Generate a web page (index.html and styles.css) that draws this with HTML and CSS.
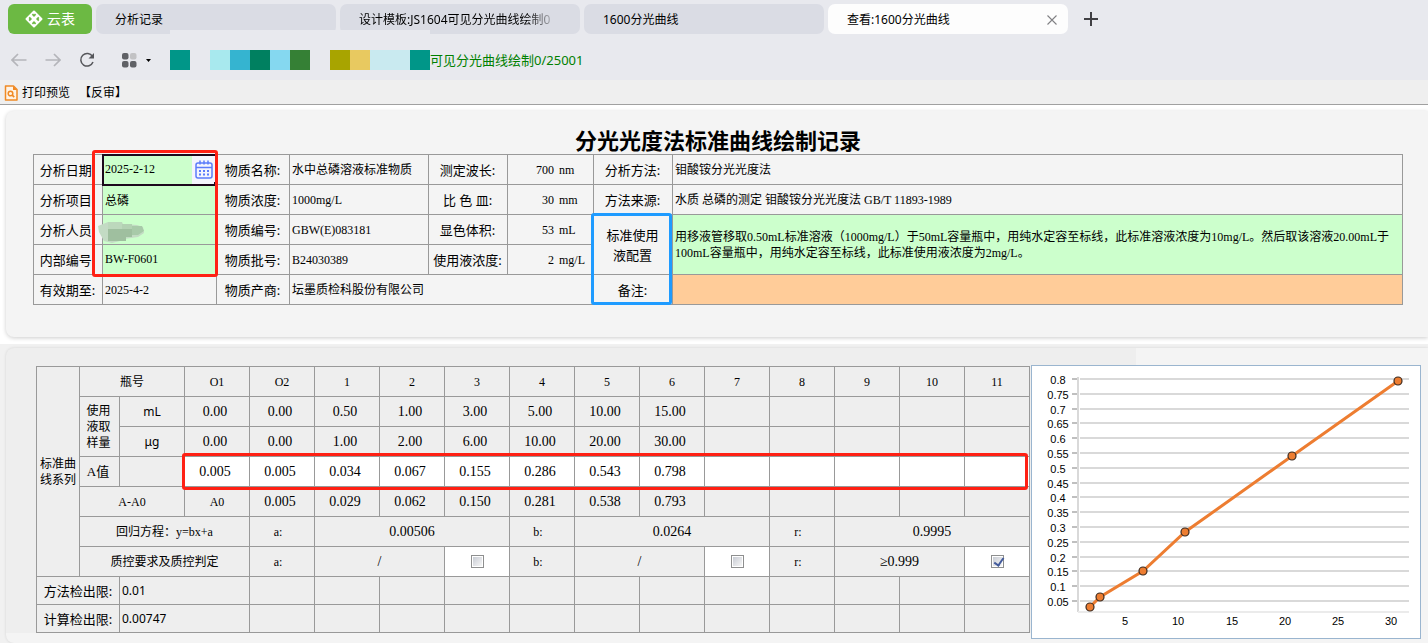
FILE: index.html
```html
<!DOCTYPE html>
<html lang="zh-CN">
<head>
    <meta charset="UTF-8">
    <meta name="viewport" content="width=device-width, initial-scale=1.0">
    <title>分光光度法标准曲线绘制记录</title>
    <link rel="stylesheet" href="styles.css">
</head>
<body>

    <header class="top">
        <nav class="tabs">
            <button class="logo" type="button">
                <svg width="18" height="18" viewBox="0 0 18 18">
                    <path d="M9 1.500L16.500 9 9 16.500 1.500 9z" fill="#fff" stroke="#fff" stroke-width="2" stroke-linejoin="round"/>
                    <path d="M9 7L6.800 4.800 8 3.600l1 .8 1-.8 1.200 1.200zM9 11l-2.200 2.200L8 14.400l1-.8 1 .8 1.200-1.200zM7 9L4.800 6.800 3.600 8l.8 1-.8 1 1.200 1.200zM11 9l2.200-2.200L14.400 8l-.8 1 .8 1-1.200 1.200z" fill="#6cb943"/>
                </svg>
                云表
            </button>
            <a class="tab" href="#">分析记录</a>
            <a class="tab" href="#"><span class="fade">设计模板:JS1604可见分光曲线绘制0</span></a>
            <a class="tab" href="#">1600分光曲线</a>
            <div class="tab active">
                <a href="#">查看:1600分光曲线</a>
                <button class="icon-btn" type="button" aria-label="关闭">
                    <svg width="10" height="10" viewBox="0 0 10 10"><path d="M.5.5l9 9M9.5.5l-9 9" stroke="#808084" stroke-width="1.1"/></svg>
                </button>
            </div>
            <button class="icon-btn add" type="button" aria-label="新建">
                <svg width="14" height="14" viewBox="0 0 14 14"><path d="M7 0v14M0 7h14" stroke="#404044" stroke-width="2"/></svg>
            </button>
            <div class="cover"></div>
        </nav>

        <div class="toolbar">
            <button class="icon-btn" type="button" aria-label="后退">
                <svg width="16" height="14" viewBox="0 0 16 14"><path d="M15.500 7H1M7 1L1 7l6 6" fill="none" stroke="#b4b5ba" stroke-width="1.700"/></svg>
            </button>
            <button class="icon-btn" type="button" aria-label="前进">
                <svg width="16" height="14" viewBox="0 0 16 14"><path d="M.5 7H15M9 1l6 6-6 6" fill="none" stroke="#b4b5ba" stroke-width="1.700"/></svg>
            </button>
            <button class="icon-btn" type="button" aria-label="刷新">
                <svg width="16" height="16" viewBox="0 0 16 16">
                    <path d="M13.500 4.500A6.300 6.300 0 1 0 14 10" fill="none" stroke="#55565a" stroke-width="1.500"/>
                    <path d="M15 1v5.500H9.500z" fill="#55565a"/>
                </svg>
            </button>
            <button class="icon-btn apps" type="button" aria-label="应用">
                <svg width="16" height="16" viewBox="0 0 16 16">
                    <rect x="1" y="1" width="6.500" height="6.500" rx="2" fill="#606166"/>
                    <rect x="9" y="1" width="6.500" height="6.500" rx="2" fill="#c2c2c4"/>
                    <rect x="1" y="9" width="6.500" height="6.500" rx="2" fill="#606166"/>
                    <rect x="9" y="9" width="6.500" height="6.500" rx="2" fill="#606166"/>
                </svg>
                <svg width="5" height="3" viewBox="0 0 5 3"><path d="M0 0h5L2.500 3z"/></svg>
            </button>
            <div class="blocks">
                <i class="teal"></i><i></i><i class="ice"></i><i class="blue"></i><i class="green"></i><i class="sky"></i><i class="leaf"></i><i></i><i class="olive"></i><i class="sand"></i><i class="pale"></i><i class="pale"></i><i class="teal"></i>
            </div>
            <span class="path">可见分光曲线绘制0/25001</span>
        </div>
    </header>

    <div class="actions">
        <button type="button">
            <svg width="14" height="16" viewBox="0 0 14 16">
                <path d="M1.500 1h8L13 4.500V15H1.500z" fill="#fff3e4" stroke="#f08a24" stroke-width="1.500" stroke-linejoin="round"/>
                <path d="M9 1v4h4z" fill="#f08a24"/>
                <circle cx="6.500" cy="8.500" r="2.300" fill="none" stroke="#f08a24" stroke-width="1.500"/>
                <path d="M8.200 10.200l2 2" stroke="#f08a24" stroke-width="1.700"/>
            </svg>
            打印预览
        </button>
        <button type="button">【反审】</button>
    </div>

    <main>
        <section class="panel">
            <h1>分光光度法标准曲线绘制记录</h1>
            <div class="sheet">
                <table class="info">
                    <colgroup>
                        <col class="w69"><col class="w114"><col class="w73"><col class="w139"><col class="w79"><col class="w86"><col class="w79"><col>
                    </colgroup>
                    <tr>
                        <th><label for="date">分析日期:</label></th>
                        <td class="edit selected">
                            <div class="date">
                                <input id="date" type="text" value="2025-2-12">
                                <button class="icon-btn" type="button" aria-label="选择日期">
                                    <svg width="18" height="19" viewBox="0 0 18 19">
                                        <rect x="1" y="3" width="16" height="15" rx="2" fill="none" stroke="#5b7cfa" stroke-width="1.500"/>
                                        <path d="M1 7.500h16M5 .5v4M9 .5v4M13 .5v4" stroke="#5b7cfa" stroke-width="1.500"/>
                                        <path d="M4 11h2m2 0h2m2 0h2M4 14.500h2m2 0h2m2 0h2" stroke="#5b7cfa" stroke-width="1.800"/>
                                    </svg>
                                </button>
                            </div>
                        </td>
                        <th>物质名称:</th><td>水中总磷溶液标准物质</td>
                        <th>测定波长:</th><td><div class="measure"><span>700</span>nm</div></td>
                        <th>分析方法:</th><td>钼酸铵分光光度法</td>
                    </tr>
                    <tr>
                        <th><label for="item">分析项目:</label></th>
                        <td class="edit"><input id="item" type="text" value="总磷"></td>
                        <th>物质浓度:</th><td>1000mg/L</td>
                        <th>比 色 皿:</th><td><div class="measure"><span>30</span>mm</div></td>
                        <th>方法来源:</th><td>水质 总磷的测定 钼酸铵分光光度法 GB/T 11893-1989</td>
                    </tr>
                    <tr>
                        <th><label for="person">分析人员:</label></th>
                        <td class="edit masked">
                            <input id="person" type="text">
                            <svg width="46" height="22" viewBox="0 0 46 22">
                                <path d="M0 5l10-4h14l1 2 14 1 6 2 1 6-6 4-14 2-4 2-8 2-8-2-5-9z" fill="#c3dbc4"/>
                                <path d="M10 1h14v7H10z" fill="#bcd8bc"/>
                                <path d="M24 3h10v5H24z" fill="#b3d1b3"/>
                                <path d="M10 8h24v8H28v4H10z" fill="#9fbf9f"/>
                                <path d="M34 5h10l2 5-6 4h-6z" fill="#a8caa9"/>
                            </svg>
                        </td>
                        <th>物质编号:</th><td>GBW(E)083181</td>
                        <th>显色体积:</th><td><div class="measure"><span>53</span>mL</div></td>
                        <th rowspan="2"><label class="two-line" for="prep">标准使用<br>液配置</label></th>
                        <td class="edit" rowspan="2"><textarea id="prep" rows="2">用移液管移取0.50mL标准溶液（1000mg/L）于50mL容量瓶中，用纯水定容至标线，此标准溶液浓度为10mg/L。然后取该溶液20.00mL于100mL容量瓶中，用纯水定容至标线，此标准使用液浓度为2mg/L。</textarea></td>
                    </tr>
                    <tr>
                        <th><label for="inner">内部编号:</label></th>
                        <td class="edit"><input id="inner" type="text" value="BW-F0601"></td>
                        <th>物质批号:</th><td>B24030389</td>
                        <th>使用液浓度:</th><td><div class="measure"><span>2</span>mg/L</div></td>
                    </tr>
                    <tr>
                        <th>有效期至:</th><td>2025-4-2</td>
                        <th>物质产商:</th><td colspan="3">坛墨质检科股份有限公司</td>
                        <th><label for="remark">备注:</label></th>
                        <td class="remark"><input id="remark" type="text"></td>
                    </tr>
                </table>
                <div class="mark mark-fields"></div>
                <div class="mark mark-labels"></div>
            </div>
        </section>

        <section class="lower">
            <div class="panel curve">
                <div class="sheet">
                    <table class="data">
                        <colgroup>
                            <col class="w43"><col class="w40"><col class="w65" span="13"><col>
                        </colgroup>
                        <tr>
                            <th rowspan="7">标准曲线系列</th><th colspan="2">瓶号</th>
                            <th>O1</th><th>O2</th><th>1</th><th>2</th><th>3</th><th>4</th><th>5</th><th>6</th><th>7</th><th>8</th><th>9</th><th>10</th><th>11</th>
                        </tr>
                        <tr>
                            <th class="narrow" rowspan="2">使用液取样量</th><th class="unit">mL</th>
                            <td>0.00</td><td>0.00</td><td>0.50</td><td>1.00</td><td>3.00</td><td>5.00</td><td>10.00</td><td>15.00</td><td></td><td></td><td></td><td></td><td></td>
                        </tr>
                        <tr>
                            <th class="unit">μg</th>
                            <td>0.00</td><td>0.00</td><td>1.00</td><td>2.00</td><td>6.00</td><td>10.00</td><td>20.00</td><td>30.00</td><td></td><td></td><td></td><td></td><td></td>
                        </tr>
                        <tr class="absorb">
                            <th class="avalue">A值</th><th></th>
                            <td><input type="text" aria-label="A值 O1" value="0.005"></td>
                            <td><input type="text" aria-label="A值 O2" value="0.005"></td>
                            <td><input type="text" aria-label="A值 1" value="0.034"></td>
                            <td><input type="text" aria-label="A值 2" value="0.067"></td>
                            <td><input type="text" aria-label="A值 3" value="0.155"></td>
                            <td><input type="text" aria-label="A值 4" value="0.286"></td>
                            <td><input type="text" aria-label="A值 5" value="0.543"></td>
                            <td><input type="text" aria-label="A值 6" value="0.798"></td>
                            <td><input type="text" aria-label="A值 7"></td>
                            <td><input type="text" aria-label="A值 8"></td>
                            <td><input type="text" aria-label="A值 9"></td>
                            <td><input type="text" aria-label="A值 10"></td>
                            <td><input type="text" aria-label="A值 11"></td>
                        </tr>
                        <tr>
                            <th colspan="2">A-A0</th><th>A0</th>
                            <td>0.005</td><td>0.029</td><td>0.062</td><td>0.150</td><td>0.281</td><td>0.538</td><td>0.793</td><td></td><td></td><td></td><td></td><td></td>
                        </tr>
                        <tr>
                            <th colspan="3">回归方程：y=bx+a</th>
                            <th class="coef">a:</th><td class="wide" colspan="3">0.00506</td>
                            <th class="coef">b:</th><td class="wide" colspan="3">0.0264</td>
                            <th class="coef">r:</th><td class="wide" colspan="3">0.9995</td>
                        </tr>
                        <tr>
                            <th colspan="3">质控要求及质控判定</th>
                            <th class="coef">a:</th><td class="wide" colspan="2">/</td><td class="check"><input type="checkbox" aria-label="a 判定"></td>
                            <th class="coef">b:</th><td class="wide" colspan="2">/</td><td class="check"><input type="checkbox" aria-label="b 判定"></td>
                            <th class="coef">r:</th><td class="wide" colspan="2">≥0.999</td><td class="check"><input type="checkbox" aria-label="r 判定" checked></td>
                        </tr>
                        <tr class="limit">
                            <th colspan="2">方法检出限:</th><td class="result" colspan="2">0.01</td>
                            <td></td><td></td><td></td><td></td><td></td><td></td><td></td><td></td><td></td><td></td><td></td><td></td>
                        </tr>
                        <tr class="limit">
                            <th colspan="2">计算检出限:</th><td class="result" colspan="2">0.00747</td>
                            <td></td><td></td><td></td><td></td><td></td><td></td><td></td><td></td><td></td><td></td><td></td><td></td>
                        </tr>
                    </table>
                    <div class="mark mark-row"></div>
                </div>
                <svg class="chart" id="chart" viewBox="1 1 388 272" role="img" aria-label="标准曲线"></svg>
            </div>
        </section>
    </main>

    <script>
        const chart = document.getElementById('chart');
        const left = 47, right = 378, top0 = 14, bottom = 247;
        const points = [[59, 242], [69, 232], [112, 206], [154, 167], [261, 91], [367, 16]];

        function add(name, attrs, text) {
            const el = document.createElementNS('http://www.w3.org/2000/svg', name);
            for (const key in attrs) el.setAttribute(key, attrs[key]);
            if (text !== undefined) el.textContent = text;
            chart.appendChild(el);
        }

        // 横向网格线和纵轴刻度
        for (let i = 0; i < 16; i++) {
            const y = Math.round(top0 + i * 14.8);
            add('line', { x1: left + 2, x2: right, y1: y, y2: y, class: 'grid' });
            add('line', { x1: left - 6, x2: left - 1, y1: y, y2: y, class: 'tick' });
            add('text', { x: 27, y: y + 5 }, Number((0.8 - i * 0.05).toFixed(2)));
        }
        add('line', { x1: left, x2: left, y1: 12, y2: bottom, class: 'grid' });
        add('line', { x1: left, x2: right, y1: bottom, y2: bottom, class: 'base' });

        // 横轴
        [94, 147, 201, 254, 307, 360].forEach((x, i) => add('text', { x: x, y: 260 }, (i + 1) * 5));

        // 曲线
        add('polyline', { points: points.join(' '), class: 'line' });
        points.forEach(p => add('circle', { cx: p[0], cy: p[1], r: 4, class: 'dot' }));
    </script>

</body>
</html>
```

FILE: styles.css
```css
* {
    box-sizing: border-box;
}

body {
    margin: 0;
    background-color: #fff;
    color: #000;
    font-family: "Liberation Serif", "Noto Sans CJK SC", serif;
    font-size: 12px;
    line-height: 16px;
}

button, input, textarea {
    margin: 0;
    padding: 0;
    border: 0;
    background: none;
    color: inherit;
    font: inherit;
}

a {
    color: inherit;
    text-decoration: none;
}

svg {
    display: block;
    flex: none;
}

.icon-btn {
    display: flex;
    align-items: center;
    justify-content: center;
}

/* 顶部标签栏 */
.top {
    background-color: #e8e9ee;
    font-family: "Noto Sans", "Noto Sans CJK SC", sans-serif;
}

.tabs {
    position: relative;
    display: flex;
    align-items: center;
    gap: 4px;
    height: 40px;
    padding: 4px 8px 6px;
}

.logo {
    display: flex;
    align-items: center;
    justify-content: center;
    gap: 4px;
    width: 84px;
    height: 30px;
    border-radius: 6px;
    background-color: #6cb943;
    color: #fff;
    font-size: 14px;
}

.tab {
    display: flex;
    align-items: center;
    justify-content: space-between;
    flex: 0 1 240px;
    height: 30px;
    padding: 2px 11px 0 19px;
    border-radius: 7px;
    background-color: #dadce4;
    white-space: nowrap;
}

.tab.active {
    background-color: #fdfdfd;
}

.fade {
    -webkit-mask-image: linear-gradient(to right, #000 88%, transparent 104%);
    mask-image: linear-gradient(to right, #000 88%, transparent 104%);
}

.add {
    margin-left: 12px;
}

.cover {
    position: absolute;
    left: 170px;
    bottom: 0;
    width: 260px;
    height: 10px;
    background-color: #e8e9ee;
}

.toolbar {
    display: flex;
    align-items: center;
    gap: 18px;
    height: 40px;
    padding-left: 11px;
}

.apps {
    justify-content: flex-start;
    gap: 9px;
    width: 31px;
    margin-left: 8px;
}

.blocks {
    display: flex;
}

.blocks i {
    width: 20px;
    height: 20px;
}

.teal { background-color: #009688; }
.ice { background-color: #a8e9ee; }
.blue { background-color: #35b4d0; }
.green { background-color: #008060; }
.sky { background-color: #85d8f0; }
.leaf { background-color: #358035; }
.olive { background-color: #a8a400; }
.sand { background-color: #e8c960; }
.pale { background-color: #c9eaf0; }

.path {
    margin-left: -18px;
    color: #008000;
    font-size: 13px;
}

.actions {
    display: flex;
    gap: 9px;
    height: 25px;
    padding: 2px 0 0 4px;
    border-bottom: 1px solid #a0a0a0;
    background-color: #efefef;
    font-family: "Noto Sans", "Noto Sans CJK SC", sans-serif;
}

.actions button {
    display: flex;
    align-items: center;
    gap: 4px;
}

/* 记录表 */
.panel {
    margin-left: 6px;
    border-radius: 8px 0 0 8px;
    background-color: #f4f4f4;
    box-shadow: 0 1px 4px rgba(0, 0, 0, 0.2);
}

main > .panel {
    margin-top: 6px;
    padding: 19px 25px 32px 27px;
}

h1 {
    margin: 0;
    text-align: center;
    font-size: 22px;
    font-weight: bold;
    line-height: 24px;
}

.sheet {
    position: relative;
}

table {
    width: 100%;
    border-collapse: collapse;
    table-layout: fixed;
}

.w40 { width: 40px; }
.w43 { width: 43px; }
.w65 { width: 65px; }
.w69 { width: 69px; }
.w73 { width: 73px; }
.w79 { width: 79px; }
.w86 { width: 86px; }
.w114 { width: 114px; }
.w139 { width: 139px; }

tr {
    height: 30px;
}

th, td {
    padding: 0;
    border: 1px solid #999;
    font-weight: normal;
}

.info th {
    padding-right: 1px;
    font-family: "Noto Sans", "Noto Sans CJK SC", sans-serif;
    font-size: 13px;
    white-space: nowrap;
}

.info td {
    padding-left: 2px;
}

.info input {
    display: block;
    width: 100%;
    height: 28px;
}

.info textarea {
    display: block;
    width: 100%;
    height: 32px;
    overflow: hidden;
    resize: none;
}

.edit {
    background-color: #cfc;
}

.remark {
    background-color: #fc9;
}

.two-line {
    display: block;
    line-height: 20px;
}

.measure {
    display: flex;
    gap: 5px;
}

.measure span {
    width: 44px;
    text-align: right;
}

.selected {
    position: relative;
    outline: 2px solid #1c081c;
    outline-offset: -1px;
}

.selected::after {
    content: "";
    position: absolute;
    right: -2px;
    bottom: -2px;
    width: 4px;
    height: 4px;
    background-color: #1c081c;
}

.date {
    display: flex;
}

.date .icon-btn {
    flex: none;
    width: 24px;
    background-color: #f4f5fd;
}

.masked {
    position: relative;
}

.masked svg {
    position: absolute;
    left: -5px;
    top: 6px;
}

/* 框选标记 */
.mark {
    position: absolute;
    border: 3px solid #ff2014;
    border-radius: 3px;
    pointer-events: none;
}

.mark-fields {
    left: 59px;
    top: -4px;
    width: 126px;
    height: 127px;
}

.mark-labels {
    left: 558px;
    top: 59px;
    width: 81px;
    height: 92px;
    border-color: #1e9bff;
}

.mark-row {
    left: 146px;
    top: 88px;
    width: 846px;
    height: 37px;
}

/* 标准曲线 */
.lower {
    margin-top: 7px;
    padding-top: 4px;
    background-color: #f1f1f1;
}

.curve {
    display: flex;
    align-items: flex-start;
    gap: 1px;
    padding: 17px 7px 4px 30px;
    background: linear-gradient(#eee, #eee) no-repeat 0 0 / 1130px 285px #f4f4f4;
    box-shadow: 0 0 3px rgba(0, 0, 0, 0.12);
}

.curve .sheet {
    flex: none;
    width: 994px;
    padding-top: 1px;
}

.data td {
    padding-right: 4px;
    font-size: 14px;
    text-align: center;
}

.data .wide {
    padding-right: 0;
}

.data .unit {
    font-family: "Noto Sans", sans-serif;
}

.data .narrow {
    padding: 0 7px 0 5px;
}

.data .avalue {
    padding-right: 3px;
    font-size: 13px;
}

.data .coef {
    padding-right: 8px;
}

.absorb td {
    background-color: #fff;
}

.absorb input {
    display: block;
    width: 100%;
    height: 28px;
    text-align: center;
}

.limit {
    height: 28px;
}

.limit th {
    font-family: "Noto Sans", "Noto Sans CJK SC", sans-serif;
    font-size: 13px;
}

.data .result {
    padding-left: 2px;
    font-family: "Noto Sans", sans-serif;
    font-size: 12px;
    text-align: left;
}

.data .check {
    padding: 0;
    background-color: #fff;
}

.check input {
    position: relative;
    display: block;
    width: 13px;
    height: 13px;
    margin: 0 auto;
    border: 1px solid #8e8f8f;
    background: linear-gradient(135deg, #c8ccd4, #f6f6f6) content-box #f4f4f4;
    padding: 1px;
    appearance: none;
}

.check input:checked::after {
    content: "";
    position: absolute;
    left: 4px;
    top: 0;
    width: 4px;
    height: 8px;
    border: solid #435b9c;
    border-width: 0 2px 2px 0;
    transform: rotate(35deg);
}

.chart {
    flex: 1;
    min-width: 0;
    border: 1px solid #9ab5cf;
    background-color: #fff;
    font-family: "Liberation Sans", sans-serif;
    font-size: 11px;
    text-anchor: middle;
}

.grid {
    stroke: #d9d9d9;
    stroke-width: 2;
}

.tick {
    stroke: #bfbfbf;
    stroke-width: 2;
}

.base {
    stroke: #ebebeb;
    stroke-width: 2;
}

.line {
    fill: none;
    stroke: #ed7d31;
    stroke-width: 3;
}

.dot {
    fill: #ed7d31;
    stroke: #3a2a20;
    stroke-width: 1.2;
}
```
